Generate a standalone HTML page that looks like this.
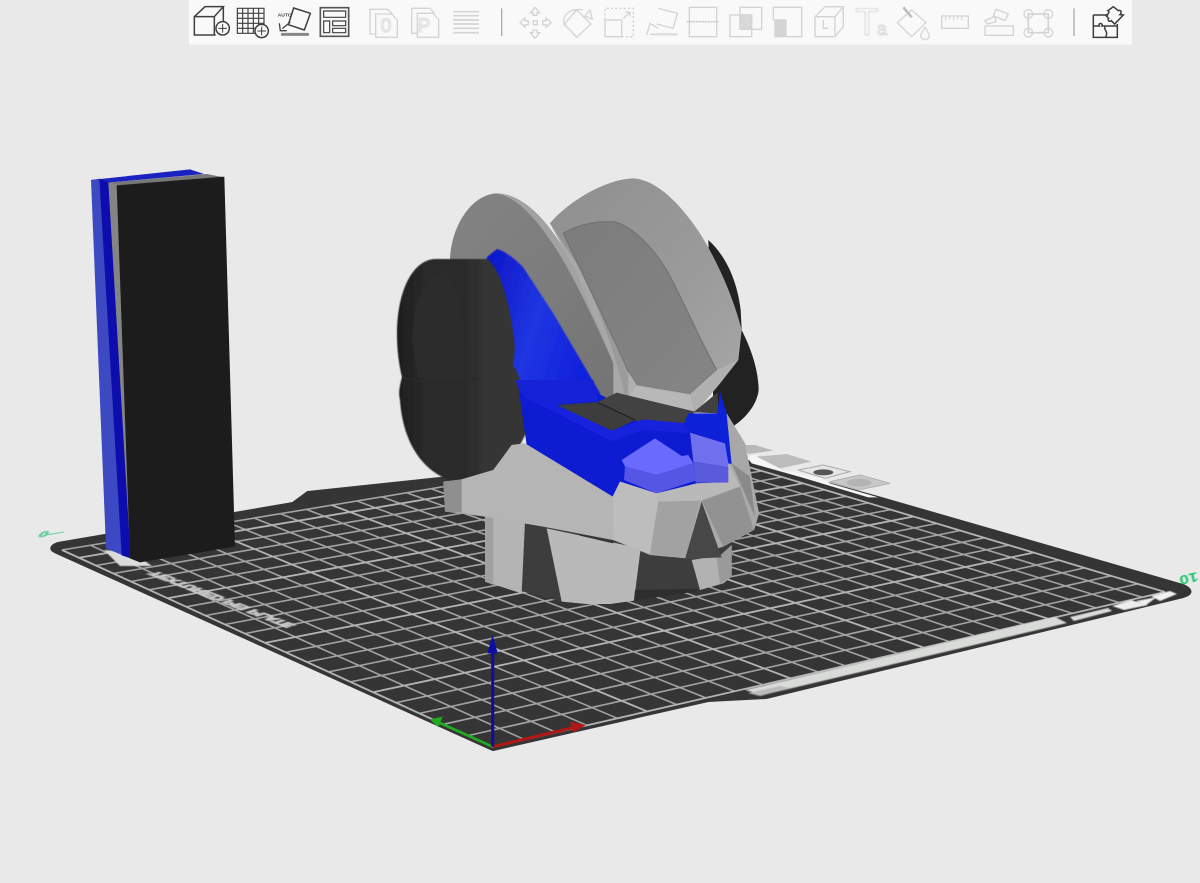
<!DOCTYPE html>
<html lang="en">
<head>
<meta charset="utf-8">
<title>3D slicer plate view</title>
<style>
html,body{margin:0;padding:0;background:#e9e9e9;}
body{width:1200px;height:883px;position:relative;overflow:hidden;font-family:"Liberation Sans",sans-serif;}
svg.layer{position:absolute;left:0;top:0;width:1200px;height:883px;}
</style>
</head>
<body>
<svg class="layer" viewBox="0 0 1200 883">
 <defs>
  <filter id="b2" x="-5%" y="-5%" width="110%" height="110%"><feGaussianBlur stdDeviation=".35"/></filter>
  <filter id="b3" x="-5%" y="-5%" width="110%" height="110%"><feGaussianBlur stdDeviation=".45"/></filter>
  <filter id="b6" x="-5%" y="-20%" width="110%" height="140%"><feGaussianBlur stdDeviation=".9"/></filter>
  <linearGradient id="disc" x1="0" y1="0" x2="1" y2="1"><stop offset="0" stop-color="#848484"/><stop offset="1" stop-color="#737373"/></linearGradient>
  <linearGradient id="visor" x1="0" y1="0" x2="1" y2="1"><stop offset="0" stop-color="#8f8f8f"/><stop offset=".6" stop-color="#9b9b9b"/><stop offset="1" stop-color="#a8a8a8"/></linearGradient>
  <linearGradient id="panel" x1="0" y1="0" x2="1" y2="1"><stop offset="0" stop-color="#7c7c7c"/><stop offset="1" stop-color="#858585"/></linearGradient>
  <linearGradient id="ear" x1="0" y1="0" x2="1" y2="0"><stop offset="0" stop-color="#1d1d1d"/><stop offset=".25" stop-color="#2c2c2c"/><stop offset=".62" stop-color="#2d2d2d"/><stop offset=".66" stop-color="#363636"/><stop offset="1" stop-color="#353535"/></linearGradient>
  <linearGradient id="blueS" x1="0" y1="0" x2="1" y2=".4"><stop offset="0" stop-color="#0a12c4"/><stop offset=".55" stop-color="#2036e2"/><stop offset="1" stop-color="#1020dc"/></linearGradient>
 </defs>

 <!-- plate -->
 <path d="M57,552 L493,749 L585,728 L708,700 L766,697 L1183,596 Q1196,592 1183,586 L878,498 L690,446 L440,479 L308,493 L293,504 L58,544 Q47,548 57,552 Z" fill="#353535" stroke="#353535" stroke-width="4" stroke-linejoin="round"/>

 <!-- grid -->
 <g fill="none" filter="url(#b2)">
  <path stroke="#a3a3a3" stroke-width="1.6" d="M524.8,739.7L90.5,545.3M556.1,732.4L118.6,540.6M587,725.3L146.4,536M617.4,718.3L173.9,531.4M676.8,704.6L227.8,522.5M705.9,697.9L254.3,518.1M734.6,691.3L280.5,513.7M762.8,684.8L306.3,509.4M818.1,672L357.1,501M845.1,665.8L382.1,496.9M871.8,659.7L406.8,492.8M898.1,653.6L431.1,488.7M949.6,641.7L479.1,480.7M974.9,635.9L502.7,476.8M999.8,630.1L526,473M1024.3,624.5L549,469.1M1072.5,613.4L594.3,461.6M1096.1,607.9L616.6,457.9M1119.4,602.6L638.7,454.2M1142.3,597.3L660.5,450.6"/>
  <path stroke="#a3a3a3" stroke-width="1.6" d="M468,735.6L1137.8,583.9M443.4,724.3L1111,575.8M419.5,713.4L1084.8,567.9M396,702.7L1059,560.2M350.6,681.9L1008.7,545.1M328.6,671.9L984.3,537.8M307,662L960.2,530.5M285.9,652.3L936.6,523.5M244.8,633.6L890.6,509.6M224.9,624.5L868.2,502.9M205.4,615.6L846.2,496.3M186.3,606.8L824.4,489.8M149.1,589.8L782.1,477.1M131,581.5L761.4,470.9M113.3,573.5L741.1,464.8M95.9,565.5L721.1,458.8M62,550L682,447"/>
  <path stroke="#b4b4b4" stroke-width="1.8" d="M493,747L62,550M647.3,711.4L201,526.9M790.6,678.4L331.9,505.2M924,647.6L455.3,484.7M1048.6,618.9L571.8,465.3M1165,592L682,447M493,747L1165,592M373.1,692.2L1033.6,552.6M265.2,642.9L913.5,516.5M167.5,598.2L803.1,483.4M78.8,557.7L701.5,452.9"/>
 </g>

 <!-- plate prints -->
 <g filter="url(#b3)">
  <polygon points="745,690 1055,617 1067,623 763,695" fill="#d9dbd9"/>
  <polygon points="748,693 780,686 790,688 760,696" fill="#bbb"/>
  <polygon points="1070,617 1108,608 1112,611 1074,621" fill="#ddd"/>
  <polygon points="1112,606 1131,600 1148,605 1124,610" fill="#eee"/>
  <polygon points="1136,601 1157,597 1146,605" fill="#eee"/>
  <polygon points="1151,596 1170,591 1177,594 1160,601" fill="#f2f2f2"/>
  <polygon points="104,550 132,552 152,566 120,566" fill="#dcdcdc"/>
 </g>
 <text transform="matrix(.93,.36,.9,-.3,156,571)" font-size="14" font-weight="700" fill="#c8c8c8" stroke="#c8c8c8" stroke-width="1.6" filter="url(#b6)" font-family="Liberation Sans, sans-serif">TEXTURED PEI PLATE</text>
 <text transform="translate(1197,572) rotate(167) scale(1,.75)" font-size="17" font-weight="700" fill="#1fc46a" font-family="Liberation Sans, sans-serif" filter="url(#b3)">10</text>
 <text transform="matrix(1.3,0,-.6,.7,37,537)" font-size="12" font-weight="700" fill="#5fcf98" stroke="#5fcf98" stroke-width=".8" font-family="Liberation Sans, sans-serif" filter="url(#b3)">0</text>
 <path d="M46,535 L64,532" stroke="#6fd0a0" stroke-width="1"/>

 <!-- far tiles -->
 <g transform="translate(735,440) scale(.33333)" filter="url(#b3)">
  <polygon points="35,50 65,45 140,88 260,115 285,130 370,155 430,172 400,172 200,112 50,70" fill="#f5f5f5"/>
  <polygon points="25,15 60,15 115,32 40,42" fill="#b8b8b8"/>
  <polygon points="65,50 155,42 230,65 135,85" fill="#bcbcbc"/>
  <polygon points="190,90 265,75 345,95 270,115" fill="#e6e6e6" stroke="#aaa" stroke-width="3"/>
  <ellipse cx="265" cy="97" rx="30" ry="9" fill="#555"/>
  <polygon points="285,125 375,105 465,130 370,150" fill="#c8c8c8" stroke="#b0b0b0" stroke-width="3"/>
  <ellipse cx="372" cy="128" rx="38" ry="12" fill="#b4b4b4"/>
 </g>

 <!-- test block -->
 <g transform="translate(30,160) scale(.33333)" filter="url(#b3)">
  <polygon points="183,60 480,28 522,42 235,68" fill="#1a22c0"/>
  <polygon points="235,68 530,42 583,52 262,76" fill="#777"/>
  <polygon points="183,60 210,56 276,1185 228,1165" fill="#3c48c2"/>
  <polygon points="208,56 236,68 304,1196 275,1186" fill="#0810ae"/>
  <polygon points="235,68 263,74 333,1208 302,1196" fill="#848484"/>
  <polygon points="260,76 583,50 615,1160 330,1207 300,1195" fill="#1f1f1f"/>
 </g>

 <!-- helmet back (zoom 3 coords) -->
 <g transform="translate(380,170) scale(.33333)" filter="url(#b3)">
  <path d="M985,210 C1030,250 1070,320 1082,420 L1085,480 C1115,540 1135,600 1136,660 C1130,710 1090,750 1055,772 L1000,700 Z" fill="#232323"/>
  <path d="M210,265 C215,160 280,72 350,70 C430,72 500,150 560,250 C610,340 680,480 730,600 L745,700 L600,720 L300,400 L210,300 Z" fill="url(#disc)"/>
  <path d="M350,70 C430,72 500,150 560,250 C610,340 680,480 745,640 L725,640 C660,480 590,340 540,255 C480,160 420,85 350,70 Z" fill="#a2a2a2"/>
  <polygon points="510,160 600,290 700,520 760,670 700,690 700,575 585,300" fill="#a8a8a8"/>
  <path d="M510,160 C560,100 670,28 760,25 C830,30 900,100 960,190 C1010,270 1060,380 1085,480 L1075,570 L1020,640 L945,730 L820,700 L735,680 C700,520 640,380 600,295 Z" fill="url(#visor)"/>
  <path d="M550,190 C590,165 640,153 700,155 C750,165 810,220 860,300 C900,370 950,490 1010,600 L930,672 L770,645 L745,605 C700,500 620,340 550,190 Z" fill="url(#panel)" stroke="#6f6f6f" stroke-width="3"/>
  <polygon points="745,605 770,645 930,672 1010,600 1075,570 1020,640 945,730 820,700 745,680" fill="#b0b0b0"/>
  <polygon points="770,650 930,675 945,730 820,700 745,680" fill="#b8b8b8"/>
 </g>

 <!-- blue side and ears -->
 <path d="M487,257 L497,249 C505,251 515,259 523,267 L553,313 L600,393 L596,403 L540,406 L495,410 L480,300 Z" fill="url(#blueS)" filter="url(#b3)"/>
 <path d="M397,335 C397,290 413,260 435,259 L487,259 C503,270 513,320 515,350 L513,365 C520,375 523,390 525,400 L527,430 C522,445 505,470 490,472 C475,480 465,482 457,482 C425,475 403,445 400,400 C398,392 400,385 402,377 C399,365 397,350 397,335 Z" fill="url(#ear)" filter="url(#b3)"/>
 <path d="M402,377 C420,383 460,383 480,378" stroke="#2a2a2a" stroke-width="1.5" fill="none"/>
 <path d="M412,340 C412,305 425,275 445,272 C458,285 466,320 465,378 L418,378 Z" fill="#2c2c2c"/>

 <!-- helmet face (zoom 4 coords) -->
 <g transform="translate(430,380) scale(.33333)" filter="url(#b3)">
  <!-- underlays -->
  <polygon points="165,405 905,495 905,590 810,630 612,662 480,672 395,665 165,605" fill="#3c3c3c"/>
  <polygon points="262,0 505,40 640,115 770,130 866,100 870,35 905,252 897,320 545,350 290,195" fill="#0b1bd0"/>
  <polygon points="40,305 95,298 190,270 245,195 285,190 548,350 570,305 680,340 800,310 895,305 895,250 890,100 945,190 987,400 972,450 880,500 770,535 660,525 550,480 340,440 165,410 45,395" fill="#aaaaaa"/>
  <!-- base -->
  <polygon points="165,405 285,425 275,640 165,605" fill="#b4b4b4"/>
  <polygon points="165,405 190,410 190,615 165,605" fill="#a0a0a0"/>
  <polygon points="350,445 632,505 612,662 540,672 470,672 395,665" fill="#b9b9b9"/>
  <polygon points="615,630 805,626 800,634 612,662" fill="#2f2f2f"/>
  <polygon points="785,540 875,525 905,495 905,590 880,610 810,630" fill="#b2b2b2"/>
  <polygon points="860,535 905,495 905,590 870,612" fill="#9a9a9a"/>
  <!-- top plates -->
  <polygon points="380,75 505,66 615,120 545,155" fill="#3c3c3c"/>
  <polygon points="500,68 560,38 795,95 760,132 612,122" fill="#434343"/>
  <path d="M505,68 L615,120" stroke="#222" stroke-width="4"/>
  <polygon points="790,97 862,38 866,100" fill="#404040"/>
  <!-- upper blue lip -->
  <polygon points="255,0 490,0 505,62 380,75 285,55" fill="#1822d8"/>
  <!-- blue highlights -->
  <polygon points="285,55 380,75 545,152 640,118 770,130 780,160 640,150 545,185 380,100" fill="#1220dc"/>
  <polygon points="762,130 775,100 862,100 870,35 890,100 905,252 895,250 882,190 785,155" fill="#1020d8"/>
  <!-- eyes -->
  <polygon points="575,240 675,175 755,228 775,225 790,250 680,285 585,260" fill="#6a6aff"/>
  <polygon points="585,260 680,285 790,250 797,302 680,340 582,300" fill="#5656e4"/>
  <polygon points="780,158 885,190 897,262 790,245" fill="#7070ee"/>
  <polygon points="790,245 897,262 895,308 797,308" fill="#5a5adc"/>
  <!-- cheek -->
  <polygon points="40,305 95,298 95,397 45,395" fill="#8f8f8f"/>
  <polygon points="95,298 190,270 245,195 285,190 548,350 550,480 340,440 165,410 95,397" fill="#b5b5b5"/>
  <polygon points="548,350 570,305 680,340 685,365 660,522 550,480" fill="#bdbdbd"/>
  <polygon points="685,365 815,338 768,532 660,522" fill="#a2a2a2"/>
  <polygon points="680,340 800,310 895,308 895,250 930,320 815,362 685,365" fill="#b9b9b9"/>
  <polygon points="815,362 930,320 972,450 880,500" fill="#929292"/>
  <polygon points="890,100 945,190 987,400 972,450 930,300 905,250" fill="#a8a8a8"/>
  <polygon points="905,250 960,290 975,410" fill="#8a8a8a"/>
  <polygon points="815,365 875,532 765,537" fill="#474747"/>
  <path d="M450,465 L550,488" stroke="#333" stroke-width="4"/>
 </g>

 <!-- axes (zoom 6 coords) -->
 <g transform="translate(400,620) scale(.33333)" filter="url(#b2)">
  <path d="M278,380 L100,300" stroke="#22aa22" stroke-width="8"/>
  <polygon points="90,298 128,290 115,322" fill="#22aa22"/>
  <path d="M278,380 L540,318" stroke="#b01616" stroke-width="9"/>
  <polygon points="558,315 510,305 520,338" fill="#b01616"/>
  <path d="M278,380 V60" stroke="#0b0ba6" stroke-width="9"/>
  <polygon points="278,45 262,100 293,100" fill="#0b0ba6"/>
 </g>

 <!-- toolbar -->
 <rect x="189" y="0" width="943" height="44.5" fill="#f9f9f9"/>
 <g transform="translate(185,0) scale(.33333)" fill="none" stroke="#3f3f3f" stroke-width="4.5" filter="url(#b3)">
  <path d="M28,50 H88 V105 H28 Z M28,50 L60,20 H115 L88,50 M115,20 V72 M88,105 H92"/>
  <circle cx="113" cy="85" r="20" fill="#f9f9f9"/>
  <path d="M100,85 H126 M113,72 V98" stroke-width="3"/>
  <path d="M157,25 H237 V100 H157 Z M173,25 V100 M189,25 V100 M205,25 V100 M221,25 V100 M157,40 H237 M157,55 H237 M157,70 H237 M157,85 H237" stroke-width="3.5"/>
  <circle cx="230" cy="93" r="20" fill="#f9f9f9"/>
  <path d="M217,93 H243 M230,80 V106" stroke-width="3"/>
  <path d="M326,24 L376,40 L358,90 L310,74 Z"/>
  <path d="M316,66 L292,86 M283,70 L286,92 L305,92" stroke-width="4"/>
  <path d="M292,103 H368" stroke-width="9" stroke="#888" stroke-linecap="round"/>
  <path d="M406,23 H491 V109 H406 Z" stroke="#555" stroke-width="5"/>
  <path d="M416,33 H482 V52 H416 Z M416,63 H434 V98 H416 Z M443,63 H482 V77 H443 Z M443,85 H482 V98 H443 Z" stroke-width="3.5"/>
  <text x="278" y="49" font-size="15" font-weight="700" fill="#444" stroke="none" font-family="Liberation Sans, sans-serif">AUTO</text>
 </g>
 <g transform="translate(185,0) scale(.33333)" fill="none" stroke="#d4d4d4" stroke-width="4" filter="url(#b3)">
  <path d="M572,102 H555 V28 H608 L622,42"/>
  <path d="M572,42 H620 L637,60 V112 H572 Z"/>
  <path d="M697,100 H680 V25 H735 L748,40"/>
  <path d="M697,40 H745 L761,58 V112 H697 Z"/>
  <path d="M805,35 H882 M805,47 H882 M805,60 H882 M805,72 H882 M805,85 H882 M805,98 H882" stroke-width="5"/>
  <path d="M950,25 V108" stroke="#acacac" stroke-width="4"/>
  <path d="M1050,22 L1064,38 H1056 V46 H1044 V38 H1036 Z M1050,115 L1064,98 H1056 V90 H1044 V98 H1036 Z M1005,68 L1020,54 V62 H1030 V74 H1020 V82 Z M1098,68 L1083,54 V62 H1073 V74 H1083 V82 Z"/>
  <rect x="1045" y="62" width="12" height="12"/>
  <path d="M1175,30 L1218,72 L1175,112 L1138,72 Z"/>
  <path d="M1140,78 C1125,45 1160,22 1195,30 M1200,48 L1222,58 L1215,30 Z"/>
  <rect x="1260" y="60" width="50" height="50"/>
  <path d="M1260,60 V25 H1345 V110 H1310" stroke-dasharray="7 6"/>
  <path d="M1315,55 L1335,37 M1320,37 H1335 V50"/>
  <path d="M1385,105 L1395,70 L1420,85 M1395,103 H1440" />
 </g>
 <g font-family="Liberation Sans, sans-serif" fill="#fafafa" stroke="#cfcfcf" stroke-width=".8" filter="url(#b3)">
  <text x="386" y="32" text-anchor="middle" font-size="19">0</text>
  <text x="424" y="32" text-anchor="middle" font-size="19">P</text>
  <text x="867" y="35" text-anchor="middle" font-size="38">T</text>
  <text x="882" y="35" text-anchor="middle" font-size="18">a</text>
 </g>
 <g transform="translate(660,0) scale(.33333)" fill="none" stroke="#d4d4d4" stroke-width="4" filter="url(#b3)">
  <path d="M-5,25 L52,40 L40,85 L-10,72"/>
  <path d="M-10,103 H50" stroke-width="8" stroke="#e0e0e0" stroke-linecap="round"/>
  <rect x="88" y="22" width="82" height="88"/>
  <path d="M80,65 H178" stroke-dasharray="6 3" stroke-width="5" stroke="#c8c8c8"/>
  <rect x="210" y="45" width="65" height="65"/>
  <rect x="240" y="22" width="65" height="66"/>
  <rect x="240" y="45" width="35" height="43" fill="#d8d8d8"/>
  <path d="M340,60 V22 H425 V110 H378 V60 Z"/>
  <rect x="345" y="60" width="30" height="50" fill="#d4d4d4"/>
  <path d="M465,50 H525 V110 H465 Z M465,50 L495,20 H550 L525,50 M550,20 V80 L525,110 M490,60 V85 H505"/>
  <path d="M712,68 L755,30 L798,68 L755,110 Z"/>
  <path d="M730,22 L755,52" stroke="#bfbfbf" stroke-width="8"/>
  <path d="M795,82 C785,98 782,105 782,106 A13,13 0 0 0 808,106 C808,105 805,98 795,82 Z"/>
  <rect x="845" y="48" width="80" height="37"/>
  <path d="M857,48 V62 M869,48 V58 M881,48 V62 M893,48 V58 M905,48 V62" stroke-width="3"/>
  <rect x="975" y="78" width="85" height="28"/>
  <path d="M1008,28 L1045,42 L1035,62 L1000,48 Z M975,62 L1005,50 L1008,65 L982,72 Z"/>
  <rect x="1105" y="42" width="60" height="56" stroke-width="5"/>
  <circle cx="1105" cy="42" r="13"/><circle cx="1165" cy="42" r="13"/><circle cx="1105" cy="98" r="13"/><circle cx="1165" cy="98" r="13"/>
  <path d="M1242,25 V108" stroke="#acacac"/>
 </g>
 <g transform="translate(660,0) scale(.33333)" fill="none" stroke="#3c3c3c" stroke-width="4.5" filter="url(#b3)">
  <path d="M1300,45 H1345 M1300,45 V112 H1372 V72 M1300,78 H1318 C1312,68 1330,68 1326,78 H1372 M1336,78 C1328,90 1347,92 1337,112"/>
  <path d="M1360,20 L1375,32 C1385,28 1385,40 1380,44 L1390,45 L1364,72 L1354,62 C1350,68 1340,60 1346,55 L1338,47 C1345,42 1350,35 1344,32 Z"/>
 </g>
</svg>
</body>
</html>
